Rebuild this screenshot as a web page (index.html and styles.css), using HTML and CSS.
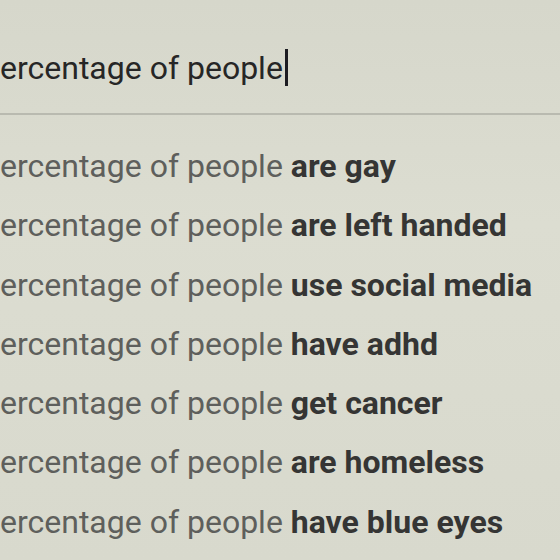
FILE: index.html
```html
<!DOCTYPE html>
<html lang="en">
<head>
<meta charset="utf-8">
<title>Search suggestions</title>
<link rel="stylesheet" href="styles.css">
</head>
<body>
<div class="screen">
  <div class="search">
    <span class="query">percentage of people</span><span class="caret"></span>
  </div>
  <ul class="suggestions">
    <li>percentage of people <b>are gay</b></li>
    <li>percentage of people <b>are left handed</b></li>
    <li>percentage of people <b>use social media</b></li>
    <li>percentage of people <b>have adhd</b></li>
    <li>percentage of people <b>get cancer</b></li>
    <li>percentage of people <b>are homeless</b></li>
    <li>percentage of people <b>have blue eyes</b></li>
  </ul>
</div>
</body>
</html>
```

FILE: styles.css
```css
html, body {
  margin: 0;
  padding: 0;
  background: #d9dace;
}
.screen {
  width: 560px;
  height: 560px;
  overflow: hidden;
  font-family: Roboto, "Liberation Sans", sans-serif;
  background: linear-gradient(180deg, #d6d7cb 0%, #dcddd1 40%, #d8d9cd 100%);
}
.search {
  height: 65px;
  padding-top: 48px;
  margin-left: -18px;
  border-bottom: 2px solid #b9bab0;
  display: flex;
  align-items: flex-start;
  font-size: 32px;
  line-height: 40px;
  color: #262626;
  white-space: nowrap;
}
.caret {
  display: inline-block;
  width: 3px;
  height: 37px;
  margin-top: 1px;
  margin-left: 2px;
  background: #1c1c22;
}
.suggestions {
  list-style: none;
  margin: 0 0 0 -18px;
  padding: 22px 0 0 0;
  font-size: 32px;
  line-height: 59.3px;
  color: #5e5f5c;
  white-space: nowrap;
}
.suggestions b {
  font-weight: 700;
  color: #353534;
}
```
